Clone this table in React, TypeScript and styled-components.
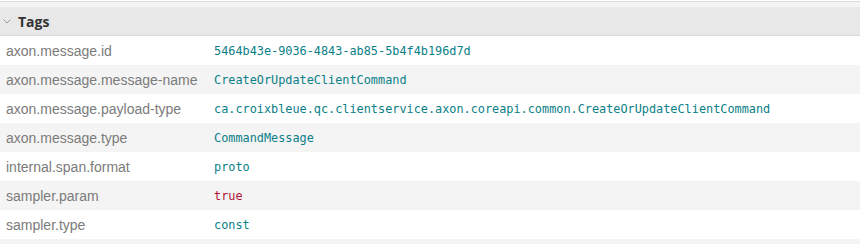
import React from "react";
import styled, { createGlobalStyle } from "styled-components";

const Global = createGlobalStyle`
  html, body { margin: 0; padding: 0; background: #fff; }
  body { font-family: "Liberation Sans", Arial, sans-serif; }
`;

const Panel = styled.section`
  width: 860px;
  border-top: 1px solid #dcdcdc;
  margin-top: 1px;
  padding-top: 5px;
  background: #f4f4f4;
`;

const Header = styled.div`
  height: 28px;
  display: flex;
  align-items: center;
  gap: 6px;
  padding-left: 2px;
  background: #e8e8e8;
  border-bottom: 1px solid #d8d8d8;
`;

const Title = styled.span`
  font-family: "Open Sans", "Liberation Sans", sans-serif;
  font-weight: 700;
  font-size: 14px;
  color: #333;
`;

const Table = styled.div`
  display: flex;
  flex-direction: column;
  padding-bottom: 5px;
`;

const Row = styled.div<{ $odd: boolean }>`
  display: grid;
  grid-template-columns: 214px 1fr;
  height: 29px;
  align-items: center;
  background: ${(p) => (p.$odd ? "#f4f4f4" : "#ffffff")};
`;

const Key = styled.span`
  padding-left: 6px;
  font-size: 14px;
  color: #7b7b7b;
`;

const Value = styled.span<{ $bool?: boolean }>`
  font-family: "DejaVu Sans Mono", monospace;
  font-size: 11.85px;
  color: ${(p) => (p.$bool ? "#b01535" : "#0a8088")};
`;

const tags: [string, string][] = [
  ["axon.message.id", "5464b43e-9036-4843-ab85-5b4f4b196d7d"],
  ["axon.message.message-name", "CreateOrUpdateClientCommand"],
  ["axon.message.payload-type", "ca.croixbleue.qc.clientservice.axon.coreapi.common.CreateOrUpdateClientCommand"],
  ["axon.message.type", "CommandMessage"],
  ["internal.span.format", "proto"],
  ["sampler.param", "true"],
  ["sampler.type", "const"],
];

const Chevron = () => (
  <svg width="10" height="8" viewBox="0 0 10 8">
    <path d="M1.5 2.5 L5 6 L8.5 2.5" fill="none" stroke="#999" strokeWidth="1" />
  </svg>
);

export default function App() {
  return (
    <>
      <Global />
      <Panel>
        <Header>
          <Chevron />
          <Title>Tags</Title>
        </Header>
        <Table>
          {tags.map(([k, v], i) => (
            <Row key={k} $odd={i % 2 === 1}>
              <Key>{k}</Key>
              <Value $bool={v === "true"}>{v}</Value>
            </Row>
          ))}
        </Table>
      </Panel>
    </>
  );
}
